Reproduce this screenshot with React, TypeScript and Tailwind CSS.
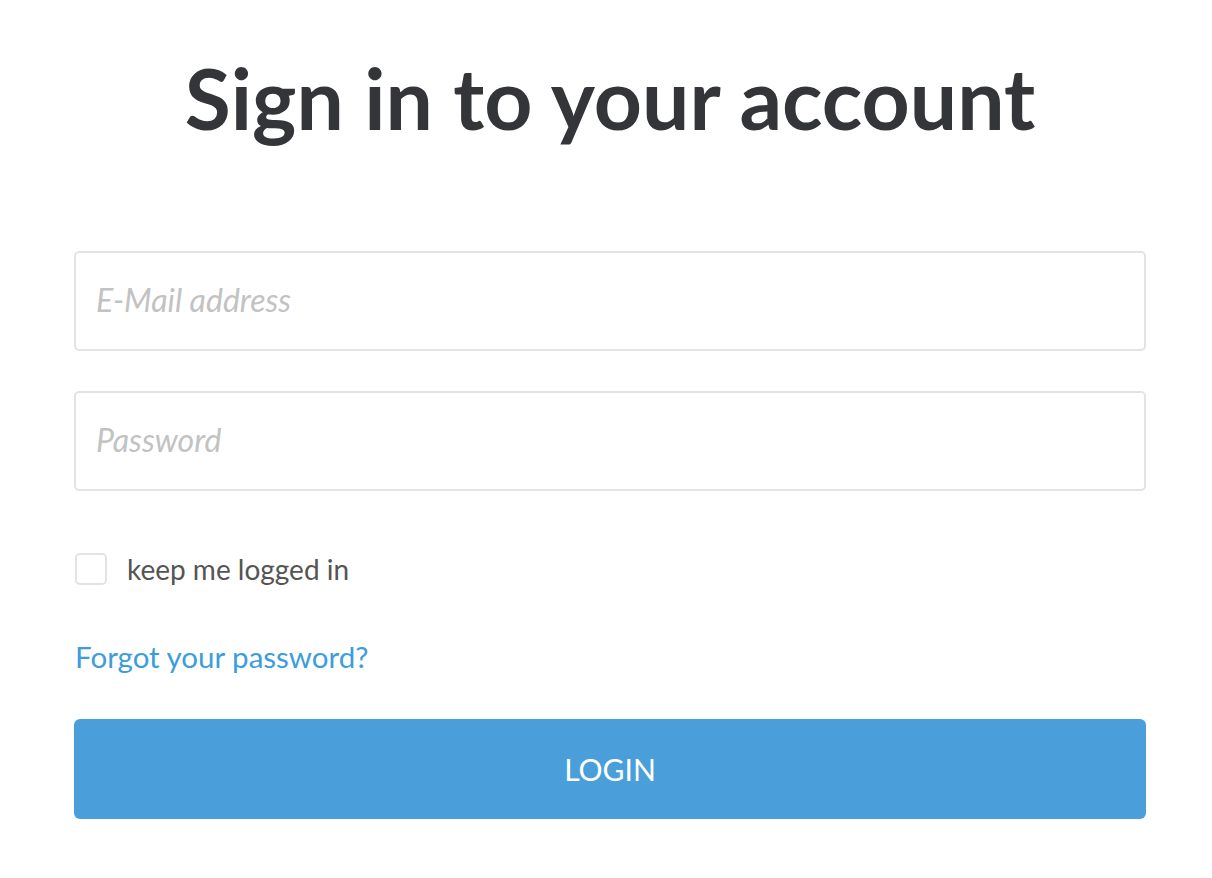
import React, { useState } from 'react';

const App: React.FC = () => {
  const [remember, setRemember] = useState(false);

  return (
    <div className="min-h-[878px] w-full bg-white" style={{ fontFamily: 'Lato, "Open Sans", sans-serif' }}>
      <div className="ml-[74px] w-[1072px] pt-[48px]">
        <h1 className="text-center text-[84px] font-bold leading-[100px] text-[#333538]">
          Sign in to your account
        </h1>

        <form className="mt-[103px] flex flex-col" onSubmit={(e) => e.preventDefault()}>
          <input
            type="email"
            placeholder="E-Mail address"
            className="h-[100px] w-full rounded-[5px] border-2 border-[#e3e3e3] px-[20px] pb-[3px] text-[32px] text-[#333] outline-none placeholder:italic placeholder:text-[#c2c2c2]"
          />
          <input
            type="password"
            placeholder="Password"
            className="mt-[40px] h-[100px] w-full rounded-[5px] border-2 border-[#e3e3e3] px-[20px] pb-[3px] text-[32px] text-[#333] outline-none placeholder:italic placeholder:text-[#c2c2c2]"
          />

          <label className="mt-[62px] flex cursor-pointer items-center gap-[20px]">
            <span
              onClick={() => setRemember(!remember)}
              className="ml-[1px] flex h-[32px] w-[32px] items-center justify-center rounded-[5px] border-2 border-[#e3e3e3] bg-white"
            >
              {remember && <span className="h-[14px] w-[14px] rounded-[2px] bg-[#4a9fdb]" />}
            </span>
            <span className="text-[28px] leading-[32px] text-[#555]">keep me logged in</span>
          </label>

          <a href="#" className="mt-[54px] ml-[1px] self-start text-[29.5px] leading-[36px] text-[#3d9ddc]">
            Forgot your password?
          </a>

          <button
            type="submit"
            className="mt-[44px] h-[100px] w-full rounded-[6px] bg-[#4a9fdb] text-[30px] text-white"
          >
            LOGIN
          </button>
        </form>
      </div>
    </div>
  );
};

export default App;
